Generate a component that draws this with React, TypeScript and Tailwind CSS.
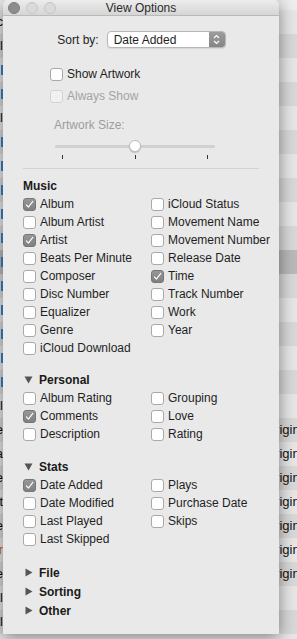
import clsx from 'clsx';

const music: [string, boolean][][] = [
  [['Album', true], ['iCloud Status', false]],
  [['Album Artist', false], ['Movement Name', false]],
  [['Artist', true], ['Movement Number', false]],
  [['Beats Per Minute', false], ['Release Date', false]],
  [['Composer', false], ['Time', true]],
  [['Disc Number', false], ['Track Number', false]],
  [['Equalizer', false], ['Work', false]],
  [['Genre', false], ['Year', false]],
  [['iCloud Download', false], ['', false]],
];

const personal: [string, boolean][][] = [
  [['Album Rating', false], ['Grouping', false]],
  [['Comments', true], ['Love', false]],
  [['Description', false], ['Rating', false]],
];

const stats: [string, boolean][][] = [
  [['Date Added', true], ['Plays', false]],
  [['Date Modified', false], ['Purchase Date', false]],
  [['Last Played', false], ['Skips', false]],
  [['Last Skipped', false], ['', false]],
];

// rows of the list that sits behind the panel
const bgRows = Array.from({ length: 27 }, (_, i) => {
  const tails = ['c', '', 'l', 'l', '', 'l', 'l', 'l', 'l', 'l', 'l', 'l', 'l', 'l', 'l', 'l', '', 'e', 'a', 'e', 't', 'e', 'r', 'e', '', '', ''];
  const blue = i >= 1 && i <= 15 && tails[i] === 'l';
  return { tail: tails[i], blue, orange: tails[i] === 'r', right: i >= 17 && i <= 23 };
});

function Box({ checked, disabled }: { checked?: boolean; disabled?: boolean }) {
  if (checked)
    return (
      <span className="flex h-[13px] w-[13px] shrink-0 items-center justify-center rounded-[3px] border border-[#767676] bg-gradient-to-b from-[#979797] to-[#808080]">
        <svg width="9" height="9" viewBox="0 0 9 9">
          <path d="M1.4 4.8 L3.4 7.2 L7.8 1.4" fill="none" stroke="#fff" strokeWidth="1.1" strokeLinecap="round" strokeLinejoin="round" />
        </svg>
      </span>
    );
  return (
    <span
      className={clsx(
        'h-[13px] w-[13px] shrink-0 rounded-[3px] border',
        disabled ? 'border-[#d3d3d3] bg-[#f1f1f1]' : 'border-[#a9a9a9] bg-white',
      )}
    />
  );
}

function Check({ label, checked, disabled }: { label: string; checked?: boolean; disabled?: boolean }) {
  if (!label) return <div />;
  return (
    <div className="flex h-[18px] items-center gap-[4px]">
      <Box checked={checked} disabled={disabled} />
      <span className={clsx('whitespace-nowrap', disabled ? 'text-[#a3a3a3]' : 'text-[#1f1f1f]')}>{label}</span>
    </div>
  );
}

function Grid({ rows }: { rows: [string, boolean][][] }) {
  return (
    <div className="grid grid-cols-[128px_1fr] pl-[20px]">
      {rows.map((r) => r.map(([label, on], j) => <Check key={label + j} label={label} checked={on} />))}
    </div>
  );
}

function Down() {
  return (
    <svg width="9" height="8" viewBox="0 0 9 8">
      <path d="M0.5 0.5 H8.5 L4.5 7.5 Z" fill="#555" />
    </svg>
  );
}

function Right() {
  return (
    <svg width="8" height="9" viewBox="0 0 8 9">
      <path d="M0.5 0.5 V8.5 L7.5 4.5 Z" fill="#555" />
    </svg>
  );
}

export default function App() {
  return (
    <div className="relative h-[639px] w-[297px] overflow-hidden bg-[#e2e2e2] font-['Liberation_Sans',Arial,sans-serif] text-[12px]">
      {/* list behind the panel */}
      <div className="h-[10px] bg-[#ededed]" />
      {bgRows.map((row, i) => (
        <div
          key={i}
          className={clsx(
            'flex h-[24px] items-center text-[13px] text-[#111]',
            i === 10 ? 'bg-[#b9b9b9]' : i % 2 ? 'bg-[#d8d8d8]' : 'bg-[#e6e6e6]',
          )}
        >
          <div className="flex w-[3px] shrink-0 justify-end overflow-hidden">
            {row.blue ? (
              <span className="h-[10px] w-[2px] shrink-0 bg-[#3a7fc4]" />
            ) : (
              <span className={clsx('whitespace-nowrap', row.orange && 'text-[#c56a1a]')}>{'Titl' + row.tail}</span>
            )}
          </div>
          {row.right && <span className="ml-[262px] whitespace-nowrap">Original</span>}
        </div>
      ))}

      {/* View Options panel */}
      <div className="absolute left-[3px] top-0 flex h-[634px] w-[276px] flex-col rounded-t-[5px] bg-[#e9e9e9] shadow-[0_3px_16px_rgba(0,0,0,0.45)]">
        <div className="relative flex h-[16px] items-center justify-center rounded-t-[5px] border-b border-[#b9b9b9] bg-gradient-to-b from-[#ececec] to-[#d6d6d6]">
          <div className="absolute left-[5px] top-[2px] flex gap-[6px]">
            <span className="h-[12px] w-[12px] rounded-full border border-[#7d7d80] bg-[#8d8d90]" />
            <span className="h-[12px] w-[12px] rounded-full border border-[#c4c4c4] bg-[#dadada]" />
            <span className="h-[12px] w-[12px] rounded-full border border-[#c4c4c4] bg-[#dadada]" />
          </div>
          <span className="text-[12px] text-[#2a2a2a]">View Options</span>
        </div>

        <div className="mt-[15px] flex h-[17px] items-center justify-center gap-[8px] pl-[1px]">
          <span className="text-[#1f1f1f]">Sort by:</span>
          <div className="flex h-[17px] w-[119px] items-stretch overflow-hidden rounded-[4px] border border-[#b7b7b7] bg-white shadow-[0_1px_1px_rgba(0,0,0,0.08)]">
            <span className="flex flex-1 items-center pl-[6px] text-[#1f1f1f]">Date Added</span>
            <span className="flex w-[16px] items-center justify-center bg-gradient-to-b from-[#9c9c9c] to-[#858585]">
              <svg width="7" height="11" viewBox="0 0 7 11">
                <path d="M1 4 L3.5 1.5 L6 4 M1 7 L3.5 9.5 L6 7" fill="none" stroke="#fff" strokeWidth="1.1" />
              </svg>
            </span>
          </div>
        </div>

        <div className="mt-[17px] pl-[47px]">
          <Check label="Show Artwork" />
          <div className="mt-[4px]">
            <Check label="Always Show" disabled />
          </div>
        </div>

        <div className="mt-[13px] flex h-[14px] items-center pl-[51px] text-[#9d9d9d]">Artwork Size:</div>

        <div className="ml-[52px] mt-[8px] w-[160px]">
          <div className="relative flex h-[12px] items-center">
            <div className="h-[3px] w-full rounded-full bg-[#d1d1d1]" />
            <span className="absolute left-[74px] top-0 h-[12px] w-[12px] rounded-full border border-[#bdbdbd] bg-white shadow-[0_1px_1px_rgba(0,0,0,0.2)]" />
          </div>
          <div className="mt-[3px] flex h-[4px] justify-between px-[7px]">
            <span className="w-px bg-[#333]" />
            <span className="w-px bg-[#333]" />
            <span className="w-px bg-[#333]" />
          </div>
        </div>

        <div className="mx-[20px] mt-[9px] h-px bg-[#d3d3d3]" />

        <div className="mt-[8px] flex h-[18px] items-center pl-[20px] font-bold text-[#1a1a1a]">Music</div>
        <Grid rows={music} />

        <div className="mt-[14px] flex h-[18px] items-center gap-[6px] pl-[21px] font-bold text-[#1a1a1a]">
          <Down />
          Personal
        </div>
        <Grid rows={personal} />

        <div className="mt-[15px] flex h-[18px] items-center gap-[6px] pl-[21px] font-bold text-[#1a1a1a]">
          <Down />
          Stats
        </div>
        <Grid rows={stats} />

        <div className="mt-[15px] flex flex-col pl-[22px] font-bold text-[#1a1a1a]">
          {['File', 'Sorting', 'Other'].map((s) => (
            <div key={s} className="flex h-[19px] items-center gap-[6px]">
              <Right />
              {s}
            </div>
          ))}
        </div>
      </div>
    </div>
  );
}
